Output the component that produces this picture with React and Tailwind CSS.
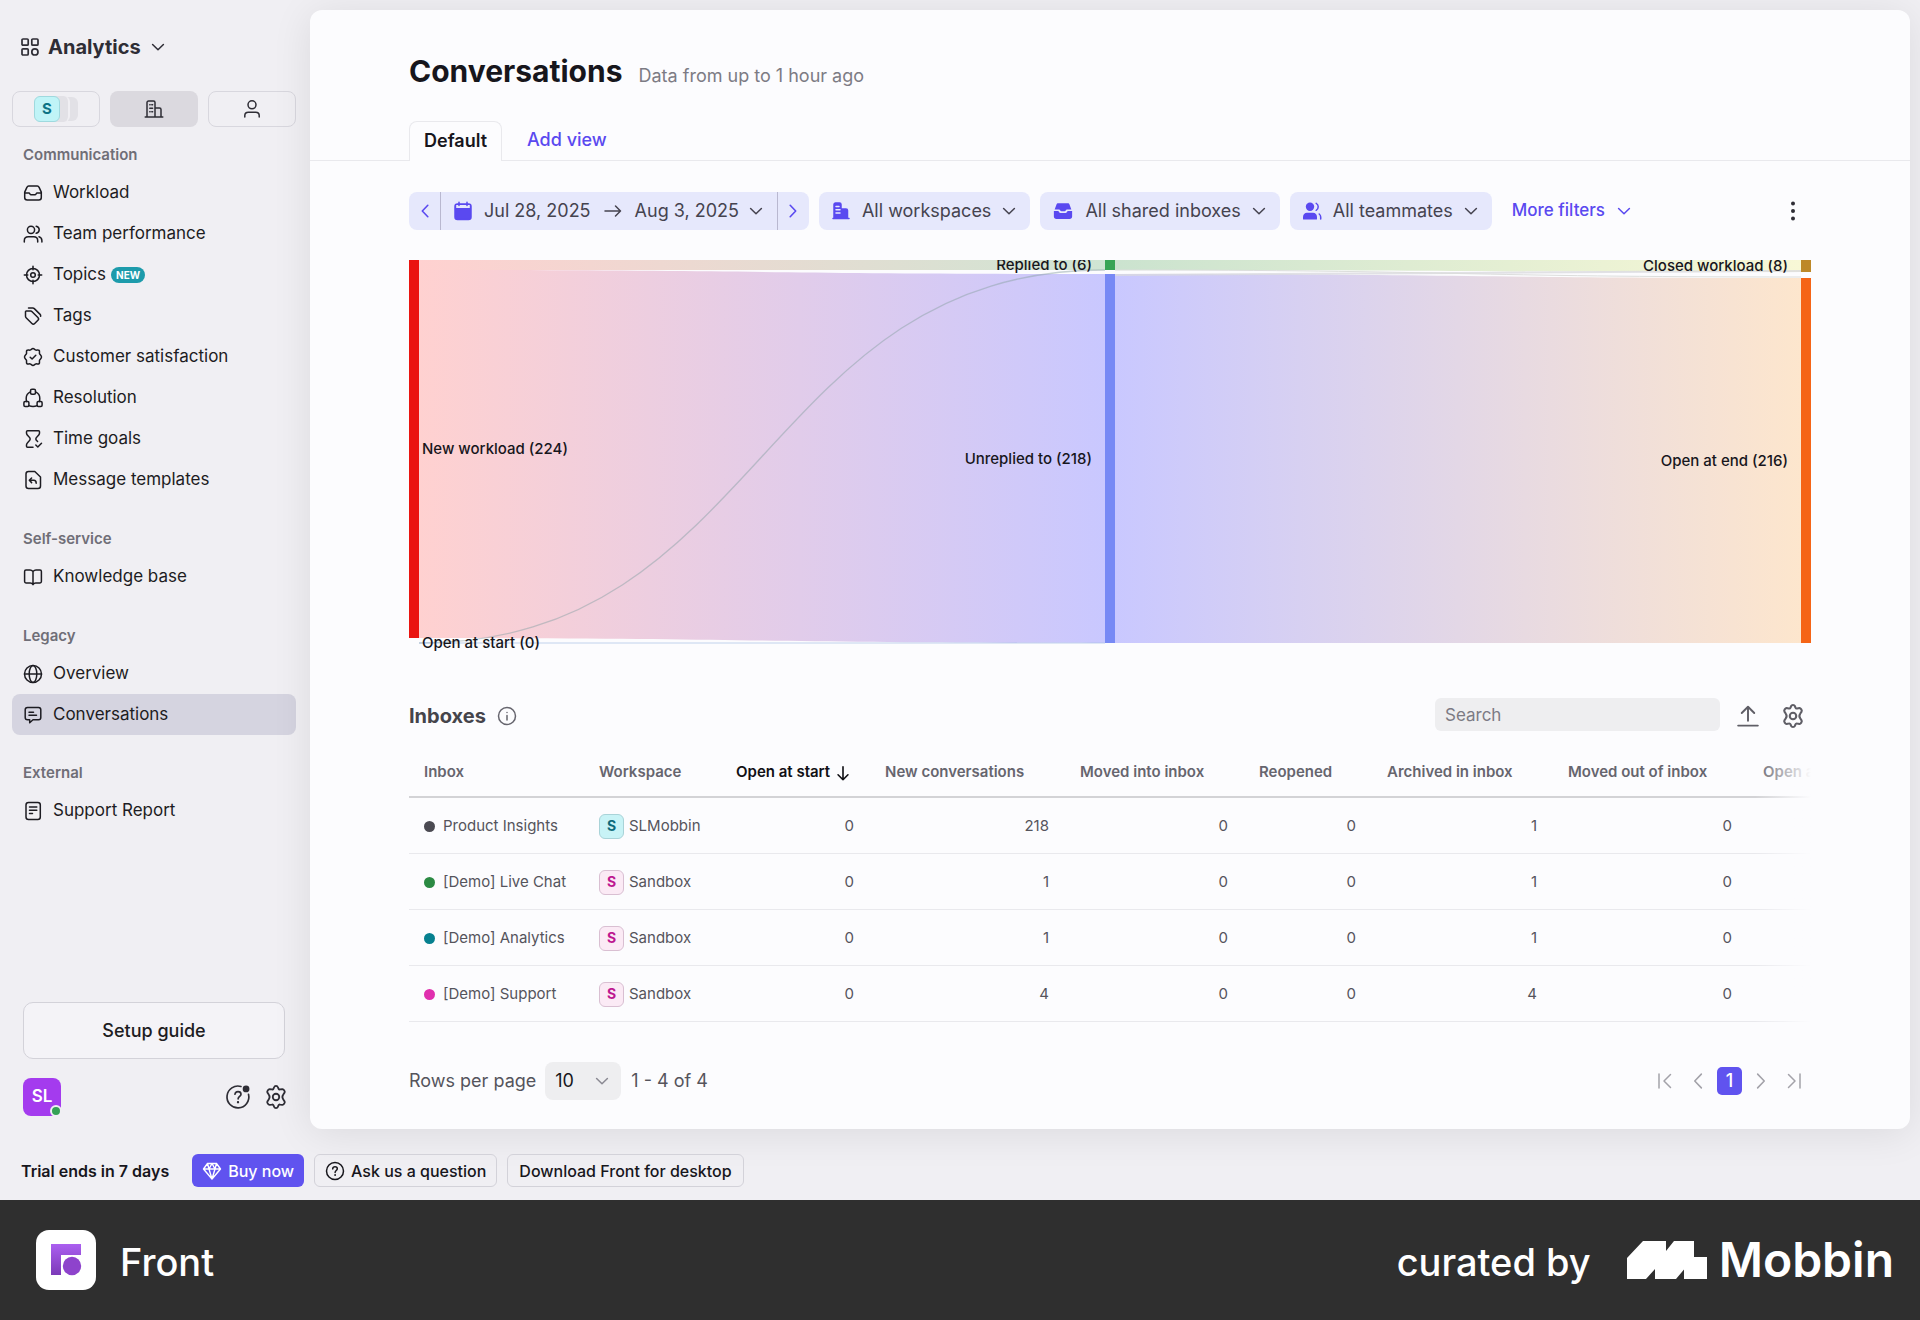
import React from 'react';

const Icon = ({ size = 20, sw = 1.5, className = '', children }) => (
  <svg
    width={size}
    height={size}
    viewBox="0 0 20 20"
    fill="none"
    stroke="currentColor"
    strokeWidth={sw}
    strokeLinecap="round"
    strokeLinejoin="round"
    className={`shrink-0 ${className}`}
    aria-hidden="true"
  >
    {children}
  </svg>
);

const GridIcon = () => (
  <Icon size={20} sw={1.7}>
    <rect x="2" y="2" width="6.2" height="6.2" rx="1" />
    <rect x="11.8" y="2" width="6.2" height="6.2" rx="1" />
    <rect x="2" y="11.8" width="6.2" height="6.2" rx="1" />
    <circle cx="14.9" cy="14.9" r="3.1" />
  </Icon>
);

const ChevronDown = ({ size = 20, className, sw = 1.7 }) => (
  <Icon size={size} className={className} sw={sw}>
    <path d="M4 7.300 10 13l6-5.700" />
  </Icon>
);

const ChevronSide = ({ left, size = 20, sw = 1.6 }) => (
  <Icon size={size} sw={sw}>
    <path d={left ? 'M12.800 4.300 7.300 10l5.500 5.700' : 'M7.200 4.300 12.700 10l-5.500 5.700'} />
  </Icon>
);

const BuildingIcon = () => (
  <Icon size={20}>
    <path d="M1.200 18h17.600M3 18V3.500C3 2.700 3.700 2 4.500 2h5c.8 0 1.500.7 1.500 1.500V18M11 9h4.500c.8 0 1.500.7 1.500 1.500V18M5.800 5.700h.3M7.800 5.700h.8M5.800 9.300h2.800M5.800 12.800h.3M7.800 12.800h.8" />
  </Icon>
);

const PersonIcon = () => (
  <Icon size={20}>
    <circle cx="10" cy="5.800" r="4" />
    <path d="M2.800 18v-1.500c0-2 1.500-3.300 3.500-3.300h7.400c2 0 3.500 1.300 3.500 3.300V18" />
  </Icon>
);

const InboxIcon = () => (
  <Icon>
    <path d="M5.700 3h8.600c.8 0 1.400.4 1.700 1.100l2.300 5v5.400c0 1.500-1 2.500-2.500 2.500H4.200c-1.500 0-2.500-1-2.500-2.500V9.100l2.300-5C4.300 3.400 4.900 3 5.700 3Z" />
    <path d="M1.700 10H6c.8 0 1 1.800 2 1.800h4c1 0 1.200-1.800 2-1.800h4.300" />
  </Icon>
);

const TeamIcon = () => (
  <Icon>
    <circle cx="8" cy="5.800" r="3.600" />
    <path d="M1.300 18v-1.300c0-2.400 1.700-3.900 4-3.900h5.400c2.300 0 4 1.500 4 3.900V18M13.200 2.300c2 .4 3 1.800 3 3.500s-1 3.100-3 3.500M16 12.800c1.800.5 2.900 2 2.900 3.900V18" />
  </Icon>
);

const TopicsIcon = () => (
  <Icon>
    <circle cx="10" cy="10" r="6.500" />
    <circle cx="10" cy="10" r="2.300" />
    <path d="M10 1.300v3.500M10 15.200v3.500M1.300 10h3.500M15.200 10h3.500" />
  </Icon>
);

const TagsIcon = () => (
  <Icon>
    <path d="M2.500 5.800v4.400c0 .6.200 1.100.6 1.500l5.800 5.800c.8.800 2 .8 2.800 0l3.200-3.200c.8-.8.8-2 0-2.800L9.100 5.700c-.4-.4-.9-.6-1.500-.6H3.200c-.4 0-.7.300-.7.700Z" />
    <path d="M5.500 2h4.300c.6 0 1.100.2 1.500.6l5.800 5.800c.5.500.7 1.200.5 1.900" />
  </Icon>
);

const BadgeCheckIcon = () => (
  <Icon>
    <path d="M10 1.500c1.200 0 1.800 1.300 2.900 1.600 1.100.2 2.300-.6 3.200.3.900.9.100 2.100.4 3.200.3 1.100 2 1.800 2 3.400s-1.700 2.300-2 3.400c-.3 1.100.5 2.300-.4 3.200-.9.900-2.100.1-3.200.3-1.100.3-1.700 1.600-2.900 1.600s-1.800-1.300-2.900-1.600c-1.100-.2-2.300.6-3.200-.3-.9-.9-.1-2.100-.4-3.200-.3-1.100-2-1.800-2-3.400s1.700-2.300 2-3.400c.3-1.100-.5-2.300.4-3.200.9-.9 2.100-.1 3.200-.3C8.200 2.800 8.800 1.500 10 1.500Z" />
    <path d="m7.200 10.200 1.900 1.800 3.700-3.700" />
  </Icon>
);

const ResolutionIcon = () => (
  <Icon>
    <rect x="7.500" y="1.200" width="5" height="5" rx="1.500" />
    <rect x=".9" y="13.500" width="5" height="5" rx="1.200" />
    <rect x="14.100" y="13.500" width="5" height="5" rx="1.200" />
    <path d="M7.500 3.900C4.900 5 3.200 7.400 3.200 10.200c0 1.200.1 2.200.4 3.300M12.500 3.900c2.600 1.100 4.300 3.500 4.300 6.300 0 1.200-.1 2.200-.4 3.300M5.900 17.600c2.600 1 5.600 1 8.200 0" />
  </Icon>
);

const TimeIcon = () => (
  <Icon>
    <path d="M10 18.300H4.500c-.6 0-1-.4-1-1v-1.500c0-2.300 3.700-3.700 3.700-5.800S3.500 6.500 3.500 4.200V2.700c0-.6.400-1 1-1h11c.6 0 1 .4 1 1v1.500c0 2.300-3.700 3.700-3.700 5.800 0 .9.900 1.700 1.800 2.500M12.800 16l2 2 3.700-3.700" />
  </Icon>
);

const TemplateIcon = () => (
  <Icon>
    <path d="M5.500 1.500h6.300L17.500 7v9c0 1.400-1.100 2.500-2.500 2.500H5.500C4.100 18.500 3 17.400 3 16V4c0-1.400 1.100-2.500 2.500-2.500Z" />
    <path d="M8.600 8 6.300 10.300l2.300 2.300M6.500 10.300h4.300c1.500 0 2.400 1 2.400 2.900" />
  </Icon>
);

const BookIcon = () => (
  <Icon>
    <path d="M10 4.500C9 3.400 8.200 3 7 3H3c-.8 0-1.400.6-1.400 1.400v10.200c0 .8.600 1.400 1.400 1.400h4.300c1.200 0 2 .5 2.700 1.700.7-1.200 1.500-1.700 2.700-1.700H17c.8 0 1.400-.6 1.400-1.400V4.400c0-.8-.6-1.400-1.400-1.400h-4c-1.200 0-2 .4-3 1.500ZM10 4.500v13" />
  </Icon>
);

const GlobeIcon = () => (
  <Icon>
    <circle cx="10" cy="10" r="8.500" />
    <ellipse cx="10" cy="10" rx="3.800" ry="8.500" />
    <path d="M1.500 10h17" />
  </Icon>
);

const ChatIcon = () => (
  <Icon>
    <path d="M4.500 2.500h11c1.400 0 2.300.9 2.300 2.300v7.700c0 1.400-.9 2.300-2.300 2.300H10l-3.300 3v-3H4.500c-1.400 0-2.300-.9-2.300-2.300V4.800c0-1.400.9-2.300 2.300-2.300ZM6 7.200h4.500M6 10.200h7.500" />
  </Icon>
);

const ReportIcon = () => (
  <Icon>
    <rect x="3" y="1.500" width="14.300" height="17" rx="2.500" />
    <path d="M6.500 6h7.300M6.500 9.300h7.300M6.500 12.600h3" />
  </Icon>
);

const GearIcon = ({ size = 24, sw = 1.4 }) => (
  <Icon size={size} sw={sw}>
    <path d="M8.600 2.300c.4-1.100 2.400-1.100 2.800 0l.5 1.200c.2.500.8.800 1.300.7l1.700-.3c1-.1 2.300 1.900 1.700 2.700l-1.100 1.700c-.7 1-.7 2.400 0 3.400l1.100 1.700c.6.800-.7 2.800-1.700 2.700l-1.700-.3c-.5-.1-1.100.2-1.300.7l-.5 1.200c-.4 1.100-2.400 1.100-2.800 0l-.5-1.200c-.2-.5-.8-.8-1.300-.7l-1.700.3c-1 .1-2.300-1.900-1.700-2.700l1.100-1.700c.7-1 .7-2.400 0-3.400L3.400 6.600c-.6-.8.700-2.800 1.700-2.700l1.700.3c.5.1 1.100-.2 1.300-.7Z" />
    <circle cx="10" cy="10" r="2.500" />
  </Icon>
);

const QuestionMark = () => (
  <>
    <path d="M7.700 7.900c.1-1.300 1-2.100 2.300-2.100s2.300.8 2.300 2c0 1.700-2.200 1.800-2.200 3.600" />
    <circle cx="10" cy="14" r=".5" fill="currentColor" strokeWidth=".8" />
  </>
);

const HelpIcon = () => (
  <Icon size={26} sw={1.3}>
    <path d="M12.300 1.900A8.400 8.400 0 1 0 18.100 8" />
    <QuestionMark />
    <circle cx="16.200" cy="3.800" r="2.600" fill="currentColor" stroke="none" />
  </Icon>
);

const CalendarSolid = () => (
  <Icon size={20} className="text-[#5a49f0]">
    <rect x="2" y="3" width="16" height="15.500" rx="2.500" fill="currentColor" />
    <path d="M3.200 4h13.600v3H3.200z" fill="#e6e8fc" stroke="none" />
    <path d="M6 1.200v3.300M14 1.200v3.300" />
  </Icon>
);

const BuildingSolid = () => (
  <Icon size={20} className="text-[#5a49f0]">
    <path d="M2 17.500h16M3 17V3.500C3 2.700 3.700 2 4.500 2h4c.8 0 1.500.7 1.500 1.500V8h5c.8 0 1.500.7 1.500 1.500V17Z" fill="currentColor" />
    <path d="M5 5.500h3M5 8.800h4M5 12.100h4" stroke="#e6e8fc" />
  </Icon>
);

const InboxSolid = () => (
  <Icon size={22} className="text-[#5a49f0]">
    <path d="M5.600 3h8.800c.7 0 1.300.4 1.500 1l1.700 4.600h-4c-1 0-1.300 1.700-2.200 1.700H8.600c-.9 0-1.200-1.700-2.200-1.700h-4L4.100 4c.2-.6.800-1 1.500-1Z" fill="currentColor" stroke="none" />
    <path d="M1.700 10h3.800c.7 0 1 1.800 2.100 1.800h4.800c1.100 0 1.400-1.800 2.100-1.800h3.800v5c0 1.400-.9 2.200-2.300 2.200H4C2.600 17.200 1.700 16.400 1.700 15Z" fill="currentColor" stroke="none" />
  </Icon>
);

const TeamSolid = () => (
  <Icon size={20} className="text-[#5a49f0]">
    <circle cx="8" cy="5.800" r="4.200" fill="currentColor" stroke="none" />
    <path d="M1 18v-2c0-2.600 1.600-4.200 4-4.200h6c2.400 0 4 1.600 4 4.200v2c0 .4-.3.600-.6.600H1.600c-.3 0-.6-.2-.6-.6Z" fill="currentColor" stroke="none" />
    <path d="M14.200 2.300c1.400.7 2 2 2 3.500s-.6 2.800-2 3.500M17.200 13c1 .8 1.500 1.800 1.500 3.100V18" />
  </Icon>
);

const communication = [
  { label: 'Workload', icon: InboxIcon },
  { label: 'Team performance', icon: TeamIcon },
  { label: 'Topics', icon: TopicsIcon, isNew: true },
  { label: 'Tags', icon: TagsIcon },
  { label: 'Customer satisfaction', icon: BadgeCheckIcon },
  { label: 'Resolution', icon: ResolutionIcon },
  { label: 'Time goals', icon: TimeIcon },
  { label: 'Message templates', icon: TemplateIcon },
];

const NavSection = ({ title, items, className = '' }) => (
  <section className={className}>
    <h2 className="px-[11px] text-[15px] leading-5 font-semibold text-[#6f6e77]">{title}</h2>
    <ul className="mt-[7px]">
      {items.map(({ label, icon: NavIcon, isNew, active }) => (
        <li key={label}>
          <a
            href="#"
            aria-current={active ? 'page' : undefined}
            className={`flex h-[41px] items-center gap-[10px] rounded-lg px-[11px] text-[17px] text-[#1d1c22] ${active ? 'bg-[#d5d4e0]' : ''}`}
          >
            <NavIcon />
            <span>{label}</span>
            {isNew && (
              <span className="-ml-[5px] rounded-full bg-[#1d9bab] px-[5px] text-[10px] leading-4 font-bold text-white">NEW</span>
            )}
          </a>
        </li>
      ))}
    </ul>
  </section>
);

const Sidebar = () => (
  <aside className="flex w-[296px] shrink-0 flex-col pb-[13px] pl-3">
    <button className="flex items-center gap-2 self-start pt-8 pl-2 text-xl leading-[30px] font-bold text-[#2e2d35]">
      <GridIcon />
      <span>Analytics</span>
      <ChevronDown size={18} />
    </button>
    <div className="mt-[29px] grid grid-cols-3 gap-[10px]">
      <button aria-label="Workspace" className="flex h-9 items-center justify-center rounded-lg border border-[#d8d7de]">
        <span className="z-30 flex size-[26px] items-center justify-center rounded-md border border-[#9fd9de] bg-[#c0f4f7] text-[15px] font-bold text-[#0d7385]">S</span>
        <span className="z-20 -ml-4 size-[26px] rounded-md border-r-2 border-[#f0eff3] bg-[#e2e1e6]" />
        <span className="-ml-4 size-6 rounded-md bg-[#e2e1e6]" />
      </button>
      <button aria-label="Company" className="flex h-9 items-center justify-center rounded-lg bg-[#dbd9df] text-[#2e2d35]">
        <BuildingIcon />
      </button>
      <button aria-label="Personal" className="flex h-9 items-center justify-center rounded-lg border border-[#d8d7de] text-[#2e2d35]">
        <PersonIcon />
      </button>
    </div>
    <nav>
      <NavSection title="Communication" items={communication} className="mt-[18px]" />
      <NavSection title="Self-service" items={[{ label: 'Knowledge base', icon: BookIcon }]} className="mt-[29px]" />
      <NavSection
        title="Legacy"
        items={[{ label: 'Overview', icon: GlobeIcon }, { label: 'Conversations', icon: ChatIcon, active: true }]}
        className="mt-[29px]"
      />
      <NavSection title="External" items={[{ label: 'Support Report', icon: ReportIcon }]} className="mt-[28px]" />
    </nav>
    <div className="mt-auto px-[11px]">
      <button className="h-[57px] w-full rounded-[10px] border border-[#d3d2d9] bg-[#f4f3f7] text-lg font-medium text-[#1d1c22]">
        Setup guide
      </button>
      <div className="mt-[19px] flex items-center">
        <button className="relative flex size-[38px] items-center justify-center rounded-lg bg-[#a43bee] text-[17px] font-semibold text-white">
          SL
          <span className="absolute -right-px -bottom-px size-3 rounded-full border-2 border-[#f0eff3] bg-[#35a155]" />
        </button>
        <div className="-mr-1 ml-auto flex items-center gap-3 text-[#2e2d35]">
          <button aria-label="Help"><HelpIcon /></button>
          <button aria-label="Settings"><GearIcon size={26} /></button>
        </div>
      </div>
    </div>
  </aside>
);

const FilterButton = ({ icon: FilterIcon, children }) => (
  <button className="flex h-[38px] items-center gap-[11px] rounded-lg bg-[#e6e8fc] px-3 text-lg text-[#45434f]">
    <FilterIcon />
    <span>{children}</span>
    <ChevronDown size={18} className="-ml-[2px]" />
  </button>
);

const Filters = () => (
  <div className="mt-[30px] flex items-center gap-[10px]">
    <div className="flex h-[38px] items-center rounded-lg bg-[#e6e8fc] text-lg text-[#45434f]">
      <button aria-label="Previous period" className="flex h-full w-8 items-center justify-center border-r border-[#b9b8d0] text-[#5a49f0]">
        <ChevronSide left />
      </button>
      <button className="flex h-full items-center px-3">
        <CalendarSolid />
        <span className="ml-[11px]">Jul 28, 2025</span>
        <Icon size={20} className="mx-3">
          <path d="M2 10h15.500M12.500 5l5 5-5 5" />
        </Icon>
        <span>Aug 3, 2025</span>
        <ChevronDown size={18} className="ml-2" />
      </button>
      <button aria-label="Next period" className="flex h-full w-8 items-center justify-center border-l border-[#b9b8d0] text-[#5a49f0]">
        <ChevronSide />
      </button>
    </div>
    <FilterButton icon={BuildingSolid}>All workspaces</FilterButton>
    <FilterButton icon={InboxSolid}>All shared inboxes</FilterButton>
    <FilterButton icon={TeamSolid}>All teammates</FilterButton>
    <button className="ml-[10px] flex items-center gap-[10px] text-[17px] font-medium text-[#5a49f0]">
      More filters
      <ChevronDown size={18} />
    </button>
    <button aria-label="More options" className="ml-auto px-2 text-[#2e2d35]">
      <svg width="20" height="20" viewBox="0 0 20 20" fill="currentColor">
        <circle cx="10" cy="2.500" r="2" />
        <circle cx="10" cy="10" r="2" />
        <circle cx="10" cy="17.500" r="2" />
      </svg>
    </button>
  </div>
);

const Gradient = ({ id, from, to }) => (
  <linearGradient id={id} x1="0" x2="1" y1="0" y2="0">
    <stop offset="0" stopColor={from} />
    <stop offset="1" stopColor={to} />
  </linearGradient>
);

const SankeyChart = () => (
  <svg viewBox="0 0 1402 400" className="mt-[30px] block h-auto w-full" role="img" aria-label="Workload flow">
    <defs>
      <Gradient id="newReplied" from="#ffd1d0" to="#cfe5d3" />
      <Gradient id="newUnreplied" from="#ffd1d0" to="#c9c8ff" />
      <Gradient id="repliedClosed" from="#cbe3cf" to="#f8f8d6" />
      <Gradient id="unrepliedOpen" from="#c9c8ff" to="#fde6cd" />
    </defs>
    <path d="M10 0H696V10H10Z" fill="url(#newReplied)" />
    <path d="M10 10C353 10 353 14 696 14V383C353 383 353 378 10 378Z" fill="url(#newUnreplied)" />
    <path d="M706 0H1392V12C1049 12 1049 10 706 10Z" fill="url(#repliedClosed)" />
    <path d="M706 14C1049 14 1049 18 1392 18V383H706Z" fill="url(#unrepliedOpen)" />
    <path d="M706 15C1049 15 1049 11 1392 11" fill="none" stroke="#d9d9de" strokeOpacity=".8" strokeWidth="2" />
    <path d="M706 10C1049 10 1049 17 1392 17" fill="none" stroke="#dcdedc" strokeWidth="1" />
    <path d="M10 383C353 383 353 10 696 10" fill="none" stroke="#8ea3a8" strokeOpacity=".5" strokeWidth="1.300" />
    <path d="M10 383H696" stroke="#a9c0e6" strokeOpacity=".7" strokeWidth="1" />
    <rect x="0" y="0" width="10" height="378" fill="#ea1410" />
    <rect x="696" y="0" width="10" height="10" fill="#37a455" />
    <rect x="696" y="14" width="10" height="369" fill="#7789f5" />
    <rect x="1392" y="0" width="10" height="12" fill="#bd8828" />
    <rect x="1392" y="18" width="10" height="365" fill="#f56416" />
    <g className="text-[15px] font-medium" fill="#17161c">
      <text x="13" y="194">New workload (224)</text>
      <text x="13" y="388">Open at start (0)</text>
      <text x="683" y="10" textAnchor="end">Replied to (6)</text>
      <text x="683" y="204" textAnchor="end">Unreplied to (218)</text>
      <text x="1379" y="11" textAnchor="end">Closed workload (8)</text>
      <text x="1379" y="206" textAnchor="end">Open at end (216)</text>
    </g>
  </svg>
);

const rows = [
  { inbox: 'Product Insights', dot: 'bg-[#4b4a52]', workspace: 'SLMobbin', values: [0, 218, 0, 0, 1, 0] },
  { inbox: '[Demo] Live Chat', dot: 'bg-[#2b8a43]', workspace: 'Sandbox', values: [0, 1, 0, 0, 1, 0] },
  { inbox: '[Demo] Analytics', dot: 'bg-[#06808f]', workspace: 'Sandbox', values: [0, 1, 0, 0, 1, 0] },
  { inbox: '[Demo] Support', dot: 'bg-[#e02fae]', workspace: 'Sandbox', values: [0, 4, 0, 0, 4, 0] },
];

const InboxTable = () => (
  <div className="relative mt-3 overflow-hidden">
    <table className="w-[1534px] table-fixed border-collapse text-[15px] text-[#55545c]">
      <colgroup>
        <col className="w-[175px]" />
        <col className="w-[137px]" />
        <col className="w-[149px]" />
        <col className="w-[195px]" />
        <col className="w-[179px]" />
        <col className="w-[128px]" />
        <col className="w-[181px]" />
        <col className="w-[195px]" />
        <col className="w-[195px]" />
      </colgroup>
      <thead>
        <tr className="h-[54px] border-b-2 border-[#d3d3d6] text-left whitespace-nowrap text-[#66656e]">
          <th className="px-[15px] pt-[6px] font-semibold">Inbox</th>
          <th className="px-[15px] pt-[6px] font-semibold">Workspace</th>
          <th className="px-[15px] pt-[6px] font-semibold text-[#111015]" aria-sort="descending">
            <button className="flex items-center gap-1">
              Open at start
              <Icon size={18} sw={1.8}>
                <path d="M10 3v14.500M4.500 12l5.500 5.500 5.500-5.500" />
              </Icon>
            </button>
          </th>
          <th className="px-[15px] pt-[6px] font-semibold">New conversations</th>
          <th className="px-[15px] pt-[6px] font-semibold">Moved into inbox</th>
          <th className="px-[15px] pt-[6px] font-semibold">Reopened</th>
          <th className="px-[15px] pt-[6px] font-semibold">Archived in inbox</th>
          <th className="px-[15px] pt-[6px] font-semibold">Moved out of inbox</th>
          <th className="px-[15px] pt-[6px] font-semibold">Open at end</th>
        </tr>
      </thead>
      <tbody>
        {rows.map((row) => (
          <tr key={row.inbox} className="h-14 border-b border-[#e9e9ed]">
            <td className="px-[15px] pt-[2px]">
              <div className="flex items-center gap-2 whitespace-nowrap">
                <span className={`size-[11px] shrink-0 rounded-full ${row.dot}`} />
                {row.inbox}
              </div>
            </td>
            <td className="px-[15px] pt-[2px]">
              <div className="flex items-center gap-[5px]">
                <span
                  className={`flex size-[25px] items-center justify-center rounded-md border text-sm font-bold ${
                    row.workspace === 'SLMobbin'
                      ? 'border-[#a9d3d8] bg-[#c8f3f6] text-[#0d6b7b]'
                      : 'border-[#d9bfd2] bg-[#fbeaf5] text-[#bd1790]'
                  }`}
                >
                  S
                </span>
                {row.workspace}
              </div>
            </td>
            {row.values.map((value, i) => (
              <td key={i} className="px-4 pt-[2px] text-right">{value}</td>
            ))}
            <td />
          </tr>
        ))}
      </tbody>
    </table>
    <div className="absolute inset-y-0 right-0 w-14 bg-linear-to-r from-[#fcfcfe]/0 to-[#fcfcfe]" />
  </div>
);

const Pagination = () => (
  <div className="mt-10 flex items-center text-lg text-[#55545c]">
    <label htmlFor="rows">Rows per page</label>
    <div className="relative ml-[9px] flex items-center">
      <select id="rows" defaultValue="10" className="h-[38px] w-[76px] appearance-none rounded-lg bg-[#eeeef0] pl-[10px] text-[#17161c]">
        <option>10</option>
        <option>25</option>
        <option>50</option>
      </select>
      <ChevronDown size={18} className="pointer-events-none absolute right-[10px] text-[#8b8a93]" />
    </div>
    <span className="ml-[10px]">1 - 4 of 4</span>
    <div className="mr-[7px] ml-auto flex items-center text-[#a3a2a9]">
      <button aria-label="First page">
        <Icon size={20}><path d="M4 3v14M15.500 3.500 9 10l6.500 6.500" /></Icon>
      </button>
      <button aria-label="Previous page" className="ml-[11px]"><ChevronSide left size={24} sw={1.3} /></button>
      <button aria-current="page" className="mx-[7px] flex h-7 w-[25px] items-center justify-center rounded-[5px] bg-[#6053ef] font-medium text-white">1</button>
      <button aria-label="Next page"><ChevronSide size={24} sw={1.3} /></button>
      <button aria-label="Last page" className="ml-[11px]">
        <Icon size={20}><path d="M16 3v14M4.500 3.500 11 10l-6.500 6.500" /></Icon>
      </button>
    </div>
  </div>
);

const Conversations = () => (
  <main className="mt-[10px] mr-[10px] ml-[14px] min-w-0 flex-1 rounded-xl bg-[#fcfcfe] pb-7 shadow-[0_4px_40px_rgba(0,0,0,0.09)]">
    <header className="border-b border-[#e9e9ed] px-[99px]">
      <div className="flex items-baseline gap-4 pt-[41px]">
        <h1 className="text-[30px] leading-10 font-bold text-[#17161c]">Conversations</h1>
        <p className="text-lg text-[#7c7b84]">Data from up to 1 hour ago</p>
      </div>
      <div className="mt-[30px] -mb-px flex text-lg">
        <button className="h-10 rounded-t-lg border border-b-0 border-[#e9e9ed] bg-[#fcfcfe] px-[14px] pb-[2px] font-semibold text-[#17161c]">Default</button>
        <button className="ml-[25px] pb-[2px] font-medium text-[#5a49f0]">Add view</button>
      </div>
    </header>
    <div className="px-[99px] pt-px">
      <Filters />
      <SankeyChart />
      <div className="mt-[38px] flex items-center">
        <h2 className="pt-[2px] text-xl font-bold text-[#45444b]">Inboxes</h2>
        <button aria-label="About inboxes" className="ml-[11px] pt-[2px] text-[#66656e]">
          <Icon size={20}>
            <circle cx="10" cy="10" r="8.500" />
            <path d="M10 9.500v4.500M10 6.400v.1" />
          </Icon>
        </button>
        <input
          type="search"
          placeholder="Search"
          aria-label="Search inboxes"
          className="ml-auto h-[33px] w-[285px] rounded-md bg-[#eeeef0] px-[10px] text-[17px] placeholder:text-[#7c7b84]"
        />
        <button aria-label="Export" className="ml-4 pt-[2px] text-[#5f5e66]">
          <Icon size={24} sw={1.6}><path d="M1.800 18h16.400M10 14V2.500M4.800 7.500 10 2.300l5.200 5.200" /></Icon>
        </button>
        <button aria-label="Table settings" className="mr-[5px] ml-5 pt-[2px] text-[#5f5e66]"><GearIcon size={26} sw={1.6} /></button>
      </div>
      <InboxTable />
      <Pagination />
    </div>
  </main>
);

const TrialBar = () => (
  <div className="flex items-center gap-[10px] pt-[25px] pb-[13px] pl-[21px] text-base font-medium text-[#17161c]">
    <span className="mr-[13px] font-semibold">Trial ends in 7 days</span>
    <button className="flex h-[33px] items-center gap-[6px] rounded-md bg-[#6053ef] px-[10px] text-white">
      <Icon size={20} sw={1.4}>
        <path d="M5.500 2.500h9L18.500 8 10 18 1.500 8ZM1.500 8h17M7 8l3 10 3-10M5.500 2.500 7 8l3-5.500L13 8l1.500-5.500" />
      </Icon>
      Buy now
    </button>
    <button className="flex h-[33px] items-center gap-[6px] rounded-md border border-[#d3d2d9] px-[10px]">
      <Icon size={20}><circle cx="10" cy="10" r="8.500" /><QuestionMark /></Icon>
      Ask us a question
    </button>
    <button className="flex h-[33px] items-center rounded-md border border-[#d3d2d9] px-[11px]">Download Front for desktop</button>
  </div>
);

const Footer = () => (
  <footer className="flex h-[120px] items-center bg-[#2f2f2f] pr-[26px] pl-9 text-white">
    <svg width="60" height="60" viewBox="0 0 60 60" aria-hidden="true">
      <defs>
        <linearGradient id="front" x1="0" x2="0" y1="0" y2="1">
          <stop offset="0" stopColor="#ab5ff0" />
          <stop offset="1" stopColor="#7c3ab8" />
        </linearGradient>
      </defs>
      <rect width="60" height="60" rx="13" fill="#fff" />
      <path d="M15 14H45V25H25V45H15Z" fill="url(#front)" />
      <circle cx="36" cy="36" r="10" fill="#fff" />
      <circle cx="36" cy="36" r="9.200" fill="#8e43cc" />
    </svg>
    <span className="ml-6 pt-1 text-[38px] font-medium">Front</span>
    <span className="ml-auto pt-1 text-[38px] font-medium">curated by</span>
    <svg width="80" height="38" viewBox="0 0 80 38" fill="currentColor" className="ml-9" aria-hidden="true">
      <path d="M16 0H39V10L47 0H67V16H80V38H57V28.500L49 38H28V28L19 38H0V17Z" />
    </svg>
    <span className="ml-3 text-5xl font-semibold">Mobbin</span>
  </footer>
);

const App = () => (
  <div className="flex min-h-screen flex-col bg-[#f0eff3] font-['Inter',sans-serif]">
    <div className="flex flex-1">
      <Sidebar />
      <Conversations />
    </div>
    <TrialBar />
    <Footer />
  </div>
);

export default App;
